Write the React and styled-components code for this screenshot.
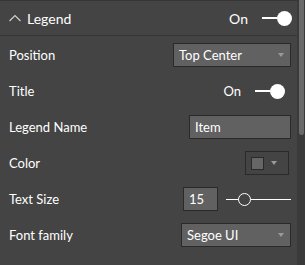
import React from 'react';
import styled, { createGlobalStyle } from 'styled-components';

const GlobalStyle = createGlobalStyle`
  body {
    margin: 0;
    background: #444444;
    font-family: 'Segoe UI', Lato, 'Open Sans', sans-serif;
    color: #ffffff;
  }
`;

const Panel = styled.div`
  display: flex;
  width: 305px;
  height: 265px;
  overflow: hidden;
  background: #444444;
`;

const Content = styled.div`
  flex: 1;
  display: flex;
  flex-direction: column;
`;

const ScrollTrack = styled.div`
  width: 8px;
  background: #3a3a3a;
  display: flex;
  justify-content: center;
  padding-left: 1px;
  box-sizing: border-box;
`;

const ScrollThumb = styled.div`
  width: 5px;
  height: 135px;
  background: #6a6a6a;
  border-radius: 0 0 3px 3px;
`;

const Header = styled.div`
  height: 34px;
  border-top: 1px solid #363636;
  border-bottom: 1px solid #363636;
  display: flex;
  align-items: center;
  padding: 0 5px 0 9px;
  font-size: 14px;
`;

const HeaderTitle = styled.span`
  margin-left: 6px;
  flex: 1;
`;

const Rows = styled.div`
  display: flex;
  flex-direction: column;
  gap: 12px;
  padding: 7px 6px 0 9px;
`;

const Row = styled.div`
  height: 24px;
  display: flex;
  align-items: center;
  justify-content: space-between;
  font-size: 13px;
`;

const Control = styled.div`
  display: flex;
  align-items: center;
  margin-right: ${(p) => p.$right || 0}px;
`;

const ToggleWrap = styled.div`
  display: flex;
  align-items: center;
  font-size: ${(p) => p.$size || 13}px;
`;

const ToggleLine = styled.div`
  width: 15px;
  height: 2px;
  background: #ffffff;
  margin-left: 14px;
`;

const ToggleKnob = styled.div`
  width: 15px;
  height: 15px;
  border-radius: 50%;
  background: #ffffff;
`;

const Box = styled.div`
  box-sizing: border-box;
  height: 24px;
  width: ${(p) => p.$w}px;
  border: 1px solid #2a2a2a;
  background: ${(p) => (p.$empty ? 'transparent' : '#616161')};
  display: flex;
  align-items: center;
  padding: 0 6px 0 5px;
  font-size: 13px;
`;

const BoxText = styled.span`
  flex: 1;
`;

const Caret = styled.div`
  width: 0;
  height: 0;
  border-left: 3px solid transparent;
  border-right: 3px solid transparent;
  border-top: 4px solid #9a9a9a;
`;

const Swatch = styled.div`
  width: 13px;
  height: 13px;
  box-sizing: border-box;
  border: 1px solid #2a2a2a;
  background: #666666;
  margin-right: 7px;
`;

const Slider = styled.div`
  position: relative;
  width: 65px;
  height: 13px;
  margin-left: 8px;
  display: flex;
  align-items: center;
`;

const SliderLine = styled.div`
  width: 100%;
  height: 1px;
  background: #ffffff;
`;

const SliderKnob = styled.div`
  position: absolute;
  left: 12px;
  top: 0;
  width: 13px;
  height: 13px;
  box-sizing: border-box;
  border-radius: 50%;
  border: 1px solid #ffffff;
  background: #444444;
`;

function Toggle({ size, right }) {
  return (
    <Control $right={right}>
      <ToggleWrap $size={size}>
        On
        <ToggleLine />
        <ToggleKnob />
      </ToggleWrap>
    </Control>
  );
}

function Dropdown({ width, text }) {
  return (
    <Box $w={width}>
      <BoxText>{text}</BoxText>
      <Caret />
    </Box>
  );
}

export default function App() {
  return (
    <>
      <GlobalStyle />
      <Panel>
        <Content>
          <Header>
            <svg width="12" height="8" viewBox="0 0 12 8">
              <polyline points="0.5,7 6,1.5 11.5,7" fill="none" stroke="#cfcfcf" strokeWidth="1.2" />
            </svg>
            <HeaderTitle>Legend</HeaderTitle>
            <Toggle size={14} />
          </Header>
          <Rows>
            <Row>
              Position
              <Dropdown width={118} text="Top Center" />
            </Row>
            <Row>
              Title
              <Toggle right={6} />
            </Row>
            <Row>
              Legend Name
              <Box $w={102}>
                <BoxText>Item</BoxText>
              </Box>
            </Row>
            <Row>
              Color
              <Control $right={2}>
                <Box $w={44} $empty>
                  <Swatch />
                  <Caret />
                </Box>
              </Control>
            </Row>
            <Row>
              Text Size
              <Control>
                <Box $w={35}>15</Box>
                <Slider>
                  <SliderLine />
                  <SliderKnob />
                </Slider>
              </Control>
            </Row>
            <Row>
              Font family
              <Dropdown width={110} text="Segoe UI" />
            </Row>
          </Rows>
        </Content>
        <ScrollTrack>
          <ScrollThumb />
        </ScrollTrack>
      </Panel>
    </>
  );
}
